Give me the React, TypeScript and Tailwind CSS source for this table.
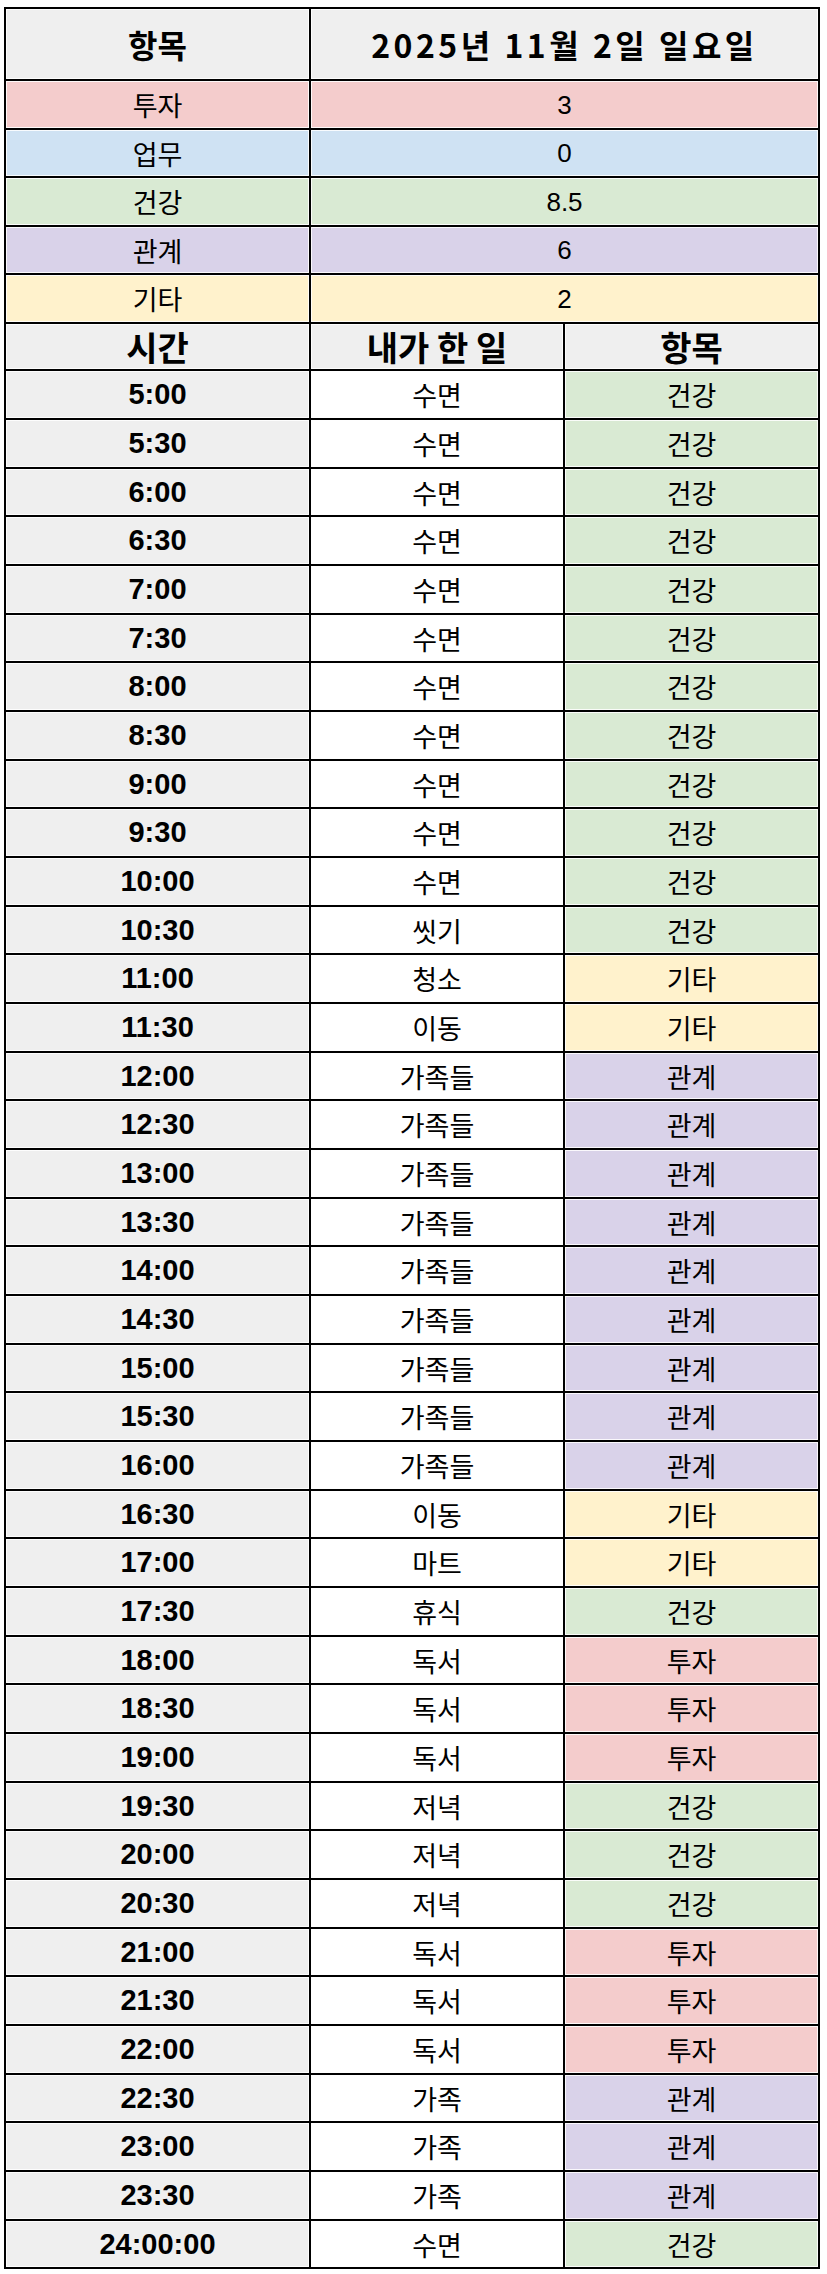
import React from 'react';

type Cat = '투자' | '업무' | '건강' | '관계' | '기타';

const catBg: Record<Cat, string> = {
  투자: 'bg-[#f4cccc]',
  업무: 'bg-[#cfe2f3]',
  건강: 'bg-[#d9ead3]',
  관계: 'bg-[#d9d2e9]',
  기타: 'bg-[#fff2cc]',
};

const summary: { cat: Cat; value: string }[] = [
  { cat: '투자', value: '3' },
  { cat: '업무', value: '0' },
  { cat: '건강', value: '8.5' },
  { cat: '관계', value: '6' },
  { cat: '기타', value: '2' },
];

const rows: [string, string, Cat][] = [
  ['5:00', '수면', '건강'],
  ['5:30', '수면', '건강'],
  ['6:00', '수면', '건강'],
  ['6:30', '수면', '건강'],
  ['7:00', '수면', '건강'],
  ['7:30', '수면', '건강'],
  ['8:00', '수면', '건강'],
  ['8:30', '수면', '건강'],
  ['9:00', '수면', '건강'],
  ['9:30', '수면', '건강'],
  ['10:00', '수면', '건강'],
  ['10:30', '씻기', '건강'],
  ['11:00', '청소', '기타'],
  ['11:30', '이동', '기타'],
  ['12:00', '가족들', '관계'],
  ['12:30', '가족들', '관계'],
  ['13:00', '가족들', '관계'],
  ['13:30', '가족들', '관계'],
  ['14:00', '가족들', '관계'],
  ['14:30', '가족들', '관계'],
  ['15:00', '가족들', '관계'],
  ['15:30', '가족들', '관계'],
  ['16:00', '가족들', '관계'],
  ['16:30', '이동', '기타'],
  ['17:00', '마트', '기타'],
  ['17:30', '휴식', '건강'],
  ['18:00', '독서', '투자'],
  ['18:30', '독서', '투자'],
  ['19:00', '독서', '투자'],
  ['19:30', '저녁', '건강'],
  ['20:00', '저녁', '건강'],
  ['20:30', '저녁', '건강'],
  ['21:00', '독서', '투자'],
  ['21:30', '독서', '투자'],
  ['22:00', '독서', '투자'],
  ['22:30', '가족', '관계'],
  ['23:00', '가족', '관계'],
  ['23:30', '가족', '관계'],
  ['24:00:00', '수면', '건강'],
];

const kr = "font-['Noto_Sans_CJK_KR',sans-serif]";
const cell =
  'flex items-center justify-center leading-none text-black shadow-[inset_0_0_0_1px_rgba(255,255,255,0.85)]';

export default function App() {
  return (
    <div className="bg-white w-[827px] min-h-[2274px] pt-[7px] pl-[4px]">
      <div className="w-[816px] border-2 border-black bg-black flex flex-col gap-[2px]">
        {/* title */}
        <div className="grid grid-cols-[303px_1fr] gap-[2px]">
          <div className={`${cell} ${kr} h-[70px] bg-[#efefef] text-[32px] font-bold`}>항목</div>
          <div className={`${cell} ${kr} h-[70px] bg-[#efefef] text-[32px] font-bold tracking-[3.5px]`}>
            2025년 11월 2일 일요일
          </div>
        </div>

        {/* totals */}
        {summary.map((s, i) => (
          <div key={s.cat} className="grid grid-cols-[303px_1fr] gap-[2px]">
            <div className={`${cell} ${kr} ${catBg[s.cat]} ${i % 2 === 0 ? 'h-[47px]' : 'h-[46px]'} text-[27px]`}>
              {s.cat}
            </div>
            <div className={`${cell} ${catBg[s.cat]} ${i % 2 === 0 ? 'h-[47px]' : 'h-[46px]'} font-['Liberation_Sans',sans-serif] text-[26px]`}>
              {s.value}
            </div>
          </div>
        ))}

        {/* column header */}
        <div className="grid grid-cols-[303px_252px_1fr] gap-[2px]">
          <div className={`${cell} ${kr} h-[45px] bg-[#efefef] text-[34px] font-bold`}>시간</div>
          <div className={`${cell} ${kr} h-[45px] bg-[#efefef] text-[34px] font-bold`}>내가 한 일</div>
          <div className={`${cell} ${kr} h-[45px] bg-[#efefef] text-[34px] font-bold`}>항목</div>
        </div>

        {rows.map(([time, what, cat], i) => (
          <div key={time} className="grid grid-cols-[303px_252px_1fr] gap-[2px]">
            <div
              className={`${cell} ${i % 3 === 2 ? 'h-[46px]' : 'h-[47px]'} bg-[#efefef] font-['Liberation_Sans',sans-serif] text-[29px] font-bold`}
            >
              {time}
            </div>
            <div className={`${cell} ${kr} ${i % 3 === 2 ? 'h-[46px]' : 'h-[47px]'} bg-white text-[27px]`}>{what}</div>
            <div className={`${cell} ${kr} ${i % 3 === 2 ? 'h-[46px]' : 'h-[47px]'} ${catBg[cat]} text-[27px]`}>
              {cat}
            </div>
          </div>
        ))}
      </div>
    </div>
  );
}
